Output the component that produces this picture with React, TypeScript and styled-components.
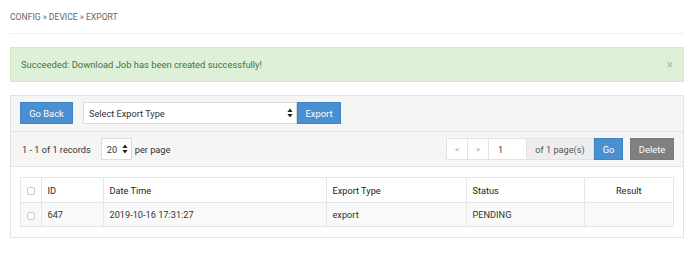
import React from "react";
import styled, { createGlobalStyle } from "styled-components";

const Global = createGlobalStyle`
  html, body { margin: 0; padding: 0; background: #fff; }
  body { font-family: Roboto, "Liberation Sans", Arial, sans-serif; font-size: 9.2px; color: #333; line-height: 13px; }
  * { box-sizing: border-box; }
`;

const Page = styled.div`
  padding: 0 9px 0 10px;
  width: 693px;
`;

const Breadcrumb = styled.div`
  height: 34px;
  padding-top: 11px;
  font-size: 8.6px;
  color: #666;
  text-transform: uppercase;
  border-bottom: 1px solid #efefef;
`;

const Alert = styled.div`
  margin-top: 13px;
  height: 35px;
  background: #dff0d8;
  border: 1px solid #d6e9c6;
  color: #3c763d;
  display: flex;
  align-items: center;
  justify-content: space-between;
  padding: 0 10px 0 10px;
  font-size: 9.4px;
`;

const Close = styled.span`
  color: #000;
  opacity: 0.18;
  font-size: 12px;
  font-weight: 700;
  line-height: 1;
`;

const Panel = styled.div`
  margin-top: 13px;
  border: 1px solid #e3e3e3;
`;

const Toolbar = styled.div<{ $pt: number; $pb: number }>`
  background: #f5f5f5;
  border-bottom: 1px solid #e3e3e3;
  display: flex;
  align-items: center;
  padding: ${(p) => p.$pt}px 9px ${(p) => p.$pb}px 9px;
`;

const Btn = styled.button<{ $variant?: "primary" | "gray" | "light"; $w: number; $joined?: boolean }>`
  height: 22px;
  width: ${(p) => p.$w}px;
  border: 1px solid
    ${(p) => (p.$variant === "gray" ? "#7a7a7a" : p.$variant === "light" ? "#e2e2e2" : "#3f84c4")};
  border-left-width: ${(p) => (p.$joined ? 0 : 1)}px;
  background: ${(p) => (p.$variant === "gray" ? "#808080" : p.$variant === "light" ? "#fff" : "#4a8fcf")};
  color: ${(p) => (p.$variant === "light" ? "#999" : "#fff")};
  font-family: inherit;
  font-size: ${(p) => (p.$variant === "light" ? "8px" : "9.4px")};
  padding: 0;
  border-radius: 0;
  display: flex;
  align-items: center;
  justify-content: center;
`;

const SelectBox = styled.div<{ $w: number }>`
  height: 22px;
  width: ${(p) => p.$w}px;
  background: #fff;
  border: 1px solid #dcdcdc;
  display: flex;
  align-items: center;
  justify-content: space-between;
  padding: 0 3px 0 5px;
  color: #333;
  font-size: 9.2px;
`;

const Spacer = styled.div<{ $w: number }>`
  width: ${(p) => p.$w}px;
  flex: none;
`;

const Grow = styled.div`
  flex: 1;
`;

const RecText = styled.span`
  padding-left: 2px;
`;

const PerPage = styled.span`
  margin-left: 3px;
`;

const PageInput = styled.div`
  height: 22px;
  width: 38px;
  background: #fff;
  border: 1px solid #e2e2e2;
  border-left: none;
  display: flex;
  align-items: center;
  padding-left: 9px;
`;

const Addon = styled.div`
  height: 22px;
  width: 67px;
  background: #eeeeee;
  border: 1px solid #e2e2e2;
  border-left: none;
  display: flex;
  align-items: center;
  justify-content: center;
  color: #555;
`;

const TableWrap = styled.div`
  background: #fff;
  padding: 10px 10px 10px 9px;
`;

const Table = styled.table`
  width: 653px;
  border-collapse: collapse;
  table-layout: fixed;
  border: 1px solid #e6e6e6;
`;

const Row = styled.tr<{ $striped?: boolean }>`
  background: ${(p) => (p.$striped ? "#f9f9f9" : "#fff")};
`;

const Cell = styled.td<{ $h: number; $center?: boolean; $head?: boolean }>`
  height: ${(p) => p.$h}px;
  border: 1px solid #e6e6e6;
  padding: 0 6px;
  text-align: ${(p) => (p.$center ? "center" : "left")};
  font-weight: 400;
  color: ${(p) => (p.$head ? "#222" : "#333")};
  font-size: 9.2px;
`;

const Check = styled.span`
  display: inline-block;
  width: 8px;
  height: 8px;
  border: 1px solid #c8c8c8;
  border-radius: 2px;
  background: #fff;
  vertical-align: middle;
`;

const Arrows = () => (
  <svg width="6" height="10" viewBox="0 0 6 10">
    <path d="M3 0.5 L5.6 4 L0.4 4 Z" fill="#222" />
    <path d="M3 9.5 L5.6 6 L0.4 6 Z" fill="#222" />
  </svg>
);

const cols = [20.5, 62, 223, 140, 118, 89.5];

export default function App() {
  return (
    <>
      <Global />
      <Page>
        <Breadcrumb>Config » Device » Export</Breadcrumb>
        <Alert>
          <span>Succeeded: Download Job has been created successfully!</span>
          <Close>×</Close>
        </Alert>
        <Panel>
          <Toolbar $pt={6} $pb={7}>
            <Btn $w={53}>Go Back</Btn>
            <Spacer $w={10} />
            <SelectBox $w={214}>
              <span>Select Export Type</span>
              <Arrows />
            </SelectBox>
            <Btn $w={44}>Export</Btn>
          </Toolbar>
          <Toolbar $pt={6} $pb={6}>
            <RecText>1 - 1 of 1 records</RecText>
            <Spacer $w={10} />
            <SelectBox $w={31}>
              <span>20</span>
              <Arrows />
            </SelectBox>
            <PerPage>per page</PerPage>
            <Grow />
            <Btn $variant="light" $w={22}>&lt;</Btn>
            <Btn $variant="light" $w={21} $joined>&gt;</Btn>
            <PageInput>1</PageInput>
            <Addon>of 1 page(s)</Addon>
            <Btn $w={29}>Go</Btn>
            <Spacer $w={7} />
            <Btn $variant="gray" $w={44}>Delete</Btn>
          </Toolbar>
          <TableWrap>
            <Table>
              <colgroup>
                {cols.map((w, i) => (
                  <col key={i} style={{ width: w }} />
                ))}
              </colgroup>
              <tbody>
                <Row>
                  <Cell $h={25} $center><Check /></Cell>
                  <Cell $h={25} $head>ID</Cell>
                  <Cell $h={25} $head>Date Time</Cell>
                  <Cell $h={25} $head>Export Type</Cell>
                  <Cell $h={25} $head>Status</Cell>
                  <Cell $h={25} $head $center>Result</Cell>
                </Row>
                <Row $striped>
                  <Cell $h={24} $center><Check /></Cell>
                  <Cell $h={24}>647</Cell>
                  <Cell $h={24}>2019-10-16 17:31:27</Cell>
                  <Cell $h={24}>export</Cell>
                  <Cell $h={24}>PENDING</Cell>
                  <Cell $h={24} $center></Cell>
                </Row>
              </tbody>
            </Table>
          </TableWrap>
        </Panel>
      </Page>
    </>
  );
}
